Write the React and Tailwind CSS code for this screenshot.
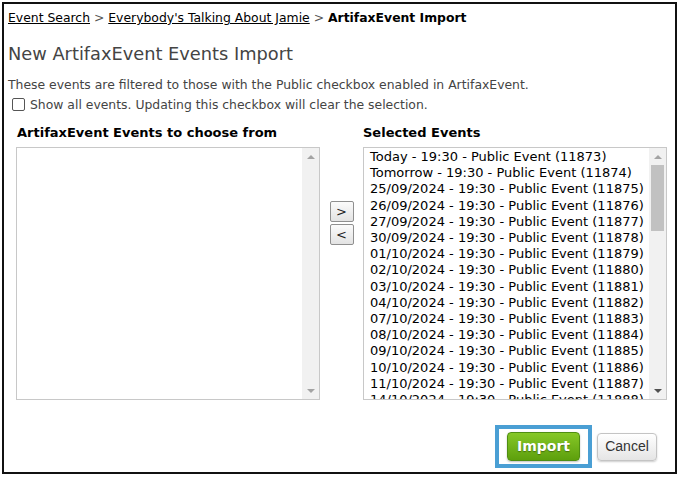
const events = [
  "Today - 19:30 - Public Event (11873)",
  "Tomorrow - 19:30 - Public Event (11874)",
  "25/09/2024 - 19:30 - Public Event (11875)",
  "26/09/2024 - 19:30 - Public Event (11876)",
  "27/09/2024 - 19:30 - Public Event (11877)",
  "30/09/2024 - 19:30 - Public Event (11878)",
  "01/10/2024 - 19:30 - Public Event (11879)",
  "02/10/2024 - 19:30 - Public Event (11880)",
  "03/10/2024 - 19:30 - Public Event (11881)",
  "04/10/2024 - 19:30 - Public Event (11882)",
  "07/10/2024 - 19:30 - Public Event (11883)",
  "08/10/2024 - 19:30 - Public Event (11884)",
  "09/10/2024 - 19:30 - Public Event (11885)",
  "10/10/2024 - 19:30 - Public Event (11886)",
  "11/10/2024 - 19:30 - Public Event (11887)",
  "14/10/2024 - 19:30 - Public Event (11888)",
];

function Scrollbar({ thumb }) {
  return (
    <div className="flex w-[17px] shrink-0 flex-col items-center bg-[#f1f1f1]">
      <div className="flex h-[17px] w-full items-center justify-center">
        <div className="h-0 w-0 border-x-[4px] border-b-[4px] border-x-transparent border-b-[#a3a3a3]" />
      </div>
      <div className="flex w-full flex-1 flex-col px-[2px]">
        {thumb && <div className="h-[66px] w-full bg-[#c1c1c1]" />}
      </div>
      <div className="flex h-[17px] w-full items-center justify-center">
        <div
          className={
            thumb
              ? "h-0 w-0 border-x-[4px] border-t-[4px] border-x-transparent border-t-[#505050]"
              : "h-0 w-0 border-x-[4px] border-t-[4px] border-x-transparent border-t-[#a3a3a3]"
          }
        />
      </div>
    </div>
  );
}

function MoveButton({ children }) {
  return (
    <button className="flex h-[21px] w-[24px] items-center justify-center rounded-[2px] border border-[#8f8f8f] bg-gradient-to-b from-[#fbfbfb] to-[#e3e3e3] text-[13px] leading-none text-[#222]">
      {children}
    </button>
  );
}

export default function App() {
  return (
    <div className="bg-white p-[2px] font-['DejaVu_Sans',Verdana,sans-serif] text-[13px] text-[#333]">
      <div className="flex h-[472px] w-[675px] flex-col border-2 border-[#111]">
        <div className="px-[4px] pt-[5px] text-[12.4px] leading-[17px] text-black">
          <a className="underline">Event Search</a>
          <span className="text-[#555]"> &gt; </span>
          <a className="underline">Everybody's Talking About Jamie</a>
          <span className="text-[#555]"> &gt; </span>
          <span className="font-bold">ArtifaxEvent Import</span>
        </div>

        <h1 className="mt-[17px] px-[4px] text-[17.8px] leading-[22px] text-[#444]">New ArtifaxEvent Events Import</h1>

        <p className="mt-[11px] px-[4px] text-[12.4px] leading-[17px] text-[#444]">
          These events are filtered to those with the Public checkbox enabled in ArtifaxEvent.
        </p>
        <label className="mt-[3px] flex items-center gap-[5px] px-[8px] text-[12.4px] leading-[17px] text-[#444]">
          <span className="h-[13px] w-[13px] rounded-[2px] border border-[#555] bg-white" />
          Show all events. Updating this checkbox will clear the selection.
        </label>

        <div className="mt-[11px] flex pl-[12px] pr-[8px]">
          <div className="flex w-[304px] shrink-0 flex-col">
            <div className="pl-[1px] font-bold leading-[17px] text-black">ArtifaxEvent Events to choose from</div>
            <div className="mt-[6px] flex h-[253px] border border-[#c8c8c8] bg-white">
              <div className="flex-1" />
              <Scrollbar />
            </div>
          </div>

          <div className="flex w-[43px] shrink-0 flex-col items-center gap-[2px] pt-[77px]">
            <MoveButton>&gt;</MoveButton>
            <MoveButton>&lt;</MoveButton>
          </div>

          <div className="flex w-[304px] shrink-0 flex-col">
            <div className="font-bold leading-[17px] text-black">Selected Events</div>
            <div className="mt-[6px] flex h-[253px] overflow-hidden border border-[#c8c8c8] bg-white">
              <div className="flex-1 overflow-hidden pl-[6px] pt-[1px] text-black">
                {events.map((e) => (
                  <div key={e} className="whitespace-nowrap leading-[16.2px]">
                    {e}
                  </div>
                ))}
              </div>
              <Scrollbar thumb />
            </div>
          </div>
        </div>

        <div className="mt-[25px] flex items-center justify-end gap-[5px] pr-[18px]">
          <div className="border-[4px] border-[#4a9fd4] bg-white px-[8px] py-[3px]">
            <button className="h-[29px] w-[73px] rounded-[4px] border border-[#4f8e12] bg-gradient-to-b from-[#86c826] to-[#5d9f0c] font-['DejaVu_Sans',Verdana,sans-serif] text-[14px] font-bold text-white [text-shadow:0_1px_1px_rgba(0,0,0,0.35)] shadow-[0_1px_2px_rgba(0,0,0,0.25)]">
              Import
            </button>
          </div>
          <button className="h-[28px] w-[60px] rounded-[4px] border border-[#c4c4c4] bg-gradient-to-b from-[#ffffff] to-[#e5e5e5] font-['Liberation_Sans',Arial,sans-serif] text-[14px] text-[#333] shadow-[0_1px_2px_rgba(0,0,0,0.2)]">
            Cancel
          </button>
        </div>
      </div>
    </div>
  );
}
